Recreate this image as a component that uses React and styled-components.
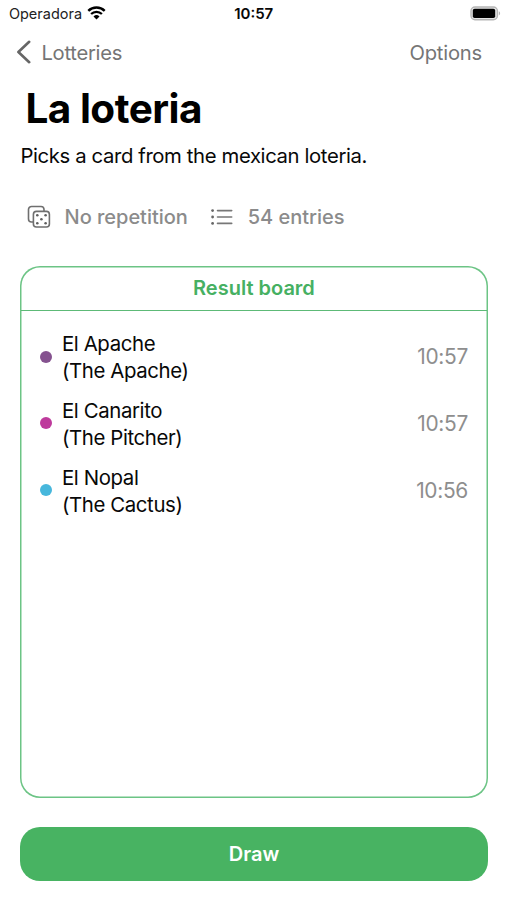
import styled, { createGlobalStyle } from 'styled-components';

const results = [
  { name: 'El Apache', translation: '(The Apache)', time: '10:57', color: '#85528f' },
  { name: 'El Canarito', translation: '(The Pitcher)', time: '10:57', color: '#be3a9c' },
  { name: 'El Nopal', translation: '(The Cactus)', time: '10:56', color: '#47b7dc' },
];

const WifiIcon = () => (
  <svg width="19" height="14" viewBox="0 0 19 14">
    <path d="M1.3 4.9A11.6 11.6 0 0 1 17.7 4.9" fill="none" stroke="#000" strokeWidth="2.4" />
    <path d="M4.1 8.1A7.5 7.5 0 0 1 14.9 8.1" fill="none" stroke="#000" strokeWidth="2.2" />
    <path d="M6.5 10.4A4.3 4.3 0 0 1 12.5 10.4L9.5 13.5Z" fill="#000" />
  </svg>
);

const BatteryIcon = () => (
  <svg width="31" height="15" viewBox="0 0 31 15">
    <rect x="1" y="1" width="26.4" height="12.8" rx="4" fill="#e6e6e6" stroke="#b5b5b5" strokeWidth="1.4" />
    <rect x="2.8" y="2.8" width="22.4" height="9.2" rx="1.8" fill="#000" />
    <path d="M28.8 5.2c1.8.6 1.8 3.6 0 4.2z" fill="#b5b5b5" />
  </svg>
);

const BackIcon = () => (
  <svg width="15" height="24" viewBox="0 0 15 24">
    <path d="M13.2 1.8L2.4 12L13.2 22.2" fill="none" stroke="#666" strokeWidth="2.6" strokeLinecap="round" strokeLinejoin="round" />
  </svg>
);

const DiceIcon = () => (
  <svg width="24" height="24" viewBox="0 0 24 24" fill="none" stroke="#6f6f6f" strokeWidth="1.6">
    <path d="M6 17H4.5A3 3 0 0 1 1.5 14V4.5A3 3 0 0 1 4.5 1.5H14A3 3 0 0 1 17 4.5V6" />
    <rect x="6.4" y="6.4" width="16" height="15.6" rx="3" />
    <g fill="#5f5f5f" stroke="none">
      <circle cx="10.3" cy="10.2" r="1.3" />
      <circle cx="18.6" cy="10.2" r="1.3" />
      <circle cx="14.4" cy="14.2" r="1.3" />
      <circle cx="10.3" cy="18.2" r="1.3" />
      <circle cx="18.6" cy="18.2" r="1.3" />
    </g>
  </svg>
);

const ListIcon = () => (
  <svg width="22" height="17" viewBox="0 0 22 17">
    <g fill="#666">
      <circle cx="1.6" cy="1.6" r="1.4" />
      <circle cx="1.6" cy="8" r="1.4" />
      <circle cx="1.6" cy="14.4" r="1.4" />
    </g>
    <path d="M6.5 1.6H20.7M6.5 8H20.7M6.5 14.4H20.7" stroke="#777" strokeWidth="1.6" strokeLinecap="round" />
  </svg>
);

const App = () => {
  return (
    <>
      <GlobalStyle />
      <Screen>
        <StatusBar>
          <Carrier>
            <span>Operadora</span>
            <WifiIcon />
          </Carrier>
          <Clock>10:57</Clock>
          <Battery>
            <BatteryIcon />
          </Battery>
        </StatusBar>

        <NavBar>
          <BackButton>
            <BackIcon />
            <span>Lotteries</span>
          </BackButton>
          <OptionsButton>Options</OptionsButton>
        </NavBar>

        <Title>La loteria</Title>
        <Description>Picks a card from the mexican loteria.</Description>

        <Meta>
          <MetaItem $gap="14px">
            <DiceIcon />
            <span>No repetition</span>
          </MetaItem>
          <MetaItem $gap="15px">
            <ListIcon />
            <span>54 entries</span>
          </MetaItem>
        </Meta>

        <Board>
          <BoardHeader>Result board</BoardHeader>
          <ResultList>
            {results.map((result) => (
              <ResultRow key={result.name}>
                <Dot $color={result.color} />
                <CardName>
                  <span>{result.name}</span>
                  <span>{result.translation}</span>
                </CardName>
                <Time>{result.time}</Time>
              </ResultRow>
            ))}
          </ResultList>
        </Board>

        <DrawButton>Draw</DrawButton>
      </Screen>
    </>
  );
};

export default App;

const GlobalStyle = createGlobalStyle`
  * {
    box-sizing: border-box;
  }

  body {
    margin: 0;
    background: #fff;
    font-family: Inter, 'Liberation Sans', sans-serif;
    color: #080808;
  }

  svg {
    display: block;
    flex-shrink: 0;
  }

  button {
    border: none;
    background: none;
    padding: 0;
    font-family: inherit;
    cursor: pointer;
  }
`;

const Screen = styled.div`
  display: flex;
  flex-direction: column;
  height: 900px;
  padding: 0 19.5px 19.5px 20.4px;
`;

const StatusBar = styled.div`
  display: grid;
  grid-template-columns: 1fr auto 1fr;
  align-items: center;
  height: 27px;
  margin: 0 -13px 0 -11.5px;
`;

const Carrier = styled.div`
  display: flex;
  align-items: center;
  gap: 5px;
  font-size: 14.5px;
  color: #222;

  svg {
    margin-top: -1px;
  }
`;

const Clock = styled.div`
  margin-left: -2px;
  font-size: 15px;
  font-weight: 600;
`;

const Battery = styled.div`
  display: flex;
  justify-content: flex-end;
`;

const NavBar = styled.div`
  display: flex;
  align-items: center;
  justify-content: space-between;
  height: 50px;
  margin: 0 5.5px 0 -4.5px;
`;

const BackButton = styled.button`
  display: flex;
  align-items: center;
  gap: 10.5px;
  font-size: 20.2px;
  letter-spacing: -0.25px;
  color: #757575;
`;

const OptionsButton = styled.button`
  font-size: 20.2px;
  letter-spacing: -0.2px;
  color: #757575;
`;

const Title = styled.h1`
  margin: 7px 0 0 5px;
  font-size: 40.5px;
  line-height: 50px;
  font-weight: 700;
  letter-spacing: -0.5px;
  color: #000;
`;

const Description = styled.p`
  margin: 8px 0 0;
  font-size: 20.3px;
  line-height: 27px;
  letter-spacing: -0.37px;
`;

const Meta = styled.div`
  display: flex;
  align-items: center;
  gap: 23px;
  height: 30px;
  margin: 33px 0 0 6.2px;
`;

const MetaItem = styled.div`
  display: flex;
  align-items: center;
  gap: ${({ $gap }) => $gap};
  font-size: 20px;
  font-weight: 500;
  letter-spacing: -0.03px;
  color: #8b8b8b;
`;

const Board = styled.section`
  flex: 1;
  display: flex;
  flex-direction: column;
  margin-top: 34px;
  border-radius: 20px;
  box-shadow: inset 0 0 0 1.5px #6cc485;
`;

const BoardHeader = styled.div`
  height: 45px;
  margin: 0 1px;
  border-bottom: 1px solid #5dba77;
  font-size: 20px;
  line-height: 45px;
  font-weight: 600;
  text-align: center;
  color: #46b062;
`;

const ResultList = styled.div`
  display: flex;
  flex-direction: column;
  gap: 12.8px;
  padding: 19px 19.5px 0;
`;

const ResultRow = styled.div`
  display: flex;
  align-items: center;
  gap: 10px;
`;

const Dot = styled.span`
  width: 12px;
  height: 12px;
  margin-bottom: 1px;
  border-radius: 50%;
  background: ${({ $color }) => $color};
`;

const CardName = styled.div`
  flex: 1;
  display: flex;
  flex-direction: column;
  font-size: 20.4px;
  line-height: 27px;
  letter-spacing: -0.38px;
`;

const Time = styled.span`
  margin-bottom: 1px;
  font-size: 20.9px;
  letter-spacing: -0.3px;
  color: #8e8e8e;
`;

const DrawButton = styled.button`
  height: 53.5px;
  margin-top: 29.5px;
  border-radius: 20px;
  background: #48b362;
  font-size: 20px;
  font-weight: 600;
  color: #fff;
`;
